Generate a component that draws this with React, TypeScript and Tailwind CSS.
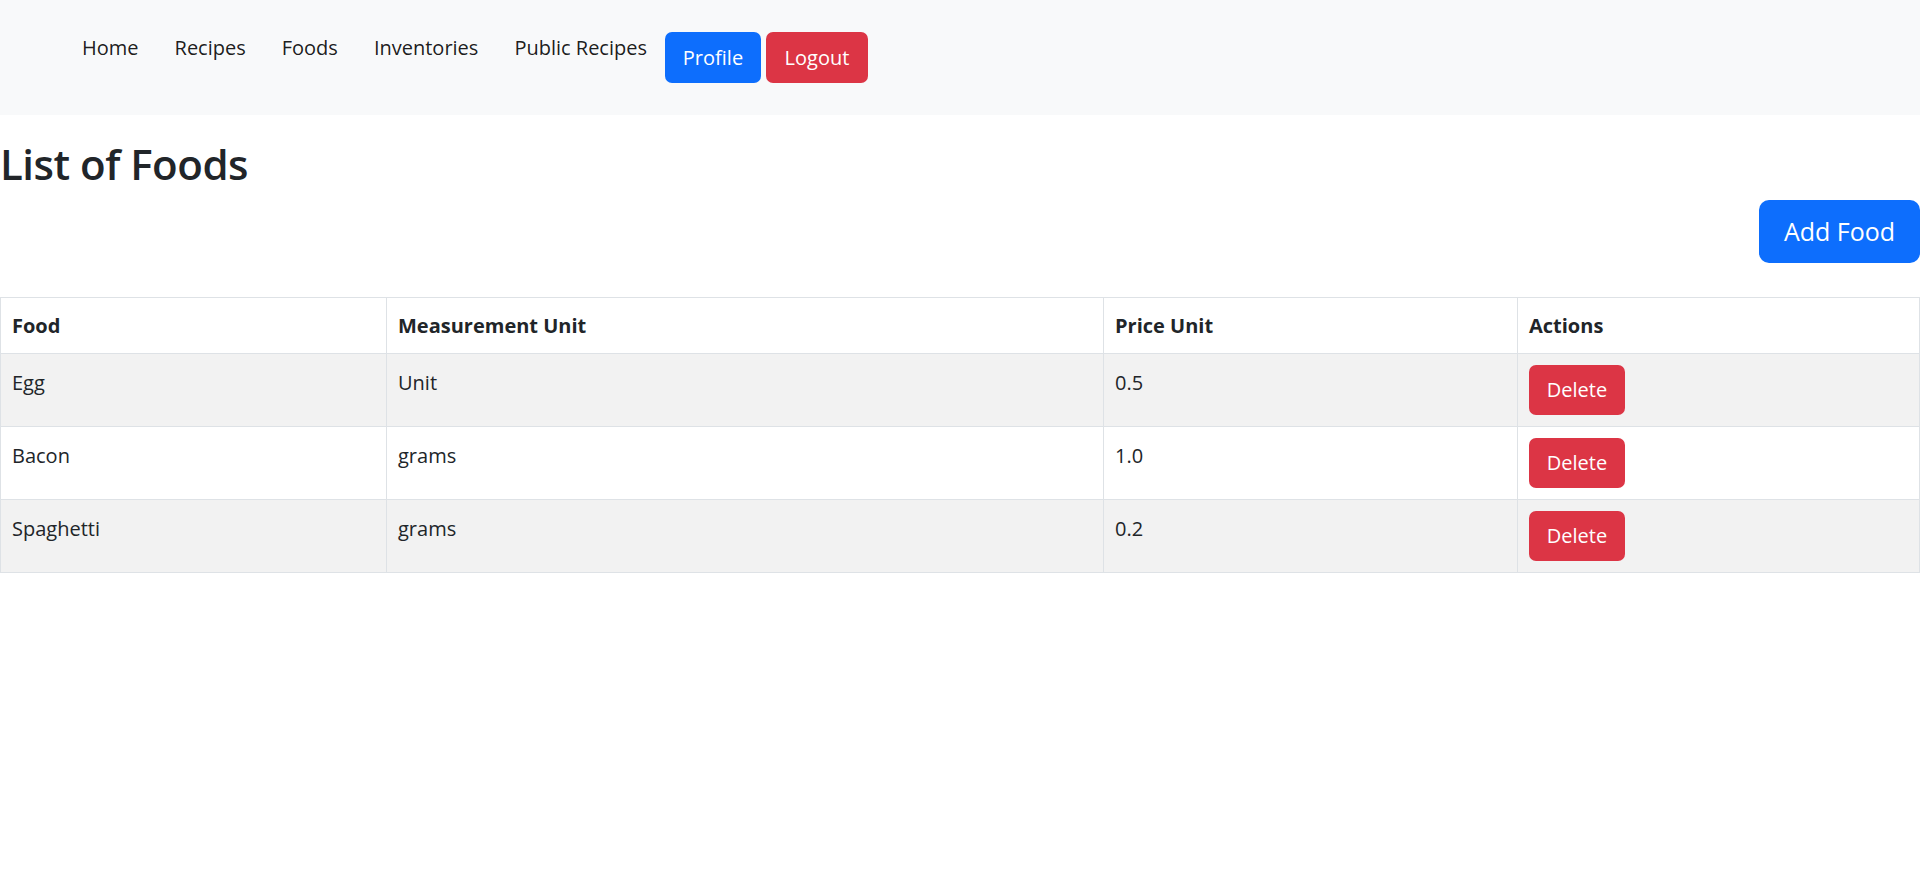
const foods = [
  { name: "Egg", unit: "Unit", price: "0.5" },
  { name: "Bacon", unit: "grams", price: "1.0" },
  { name: "Spaghetti", unit: "grams", price: "0.2" },
];

const links = ["Home", "Recipes", "Foods", "Inventories", "Public Recipes"];

export default function App() {
  return (
    <div className="min-h-[893px] bg-white text-[#212529] font-['Open_Sans',sans-serif]">
      <nav className="h-[115px] bg-[#f8f9fa] flex items-start pl-[64px]">
        <ul className="flex items-start">
          {links.map((l) => (
            <li key={l}>
              <a href="#" className="block px-[18px] pt-[33px] text-[20px] leading-[30px] text-black/90">
                {l}
              </a>
            </li>
          ))}
          <li className="pt-[32px] flex gap-[5px]">
            <button className="h-[51px] w-[96px] rounded-[7px] bg-[#0d6efd] text-white text-[20px]">Profile</button>
            <button className="h-[51px] w-[102px] rounded-[7px] bg-[#dc3545] text-white text-[20px]">Logout</button>
          </li>
        </ul>
      </nav>

      <h1 className="mt-[20px] text-[42px] leading-[58px] font-semibold tracking-[-0.5px]">List of Foods</h1>

      <div className="flex justify-end mt-[7px]">
        <button className="h-[63px] w-[161px] rounded-[10px] bg-[#0d6efd] text-white text-[25px]">Add Food</button>
      </div>

      <table className="mt-[34px] w-full border-collapse text-[20px] leading-[30px]">
        <colgroup>
          <col className="w-[386px]" />
          <col className="w-[717px]" />
          <col className="w-[414px]" />
          <col />
        </colgroup>
        <thead>
          <tr className="h-[56px]">
            <th className="border border-[#dee2e6] px-[11px] text-left font-bold">Food</th>
            <th className="border border-[#dee2e6] px-[11px] text-left font-bold">Measurement Unit</th>
            <th className="border border-[#dee2e6] px-[11px] text-left font-bold">Price Unit</th>
            <th className="border border-[#dee2e6] px-[11px] text-left font-bold">Actions</th>
          </tr>
        </thead>
        <tbody>
          {foods.map((f, i) => (
            <tr key={f.name} className={i % 2 === 0 ? "bg-[#f2f2f2]" : "bg-white"}>
              <td className="border border-[#dee2e6] px-[11px] pt-[14px] align-top">{f.name}</td>
              <td className="border border-[#dee2e6] px-[11px] pt-[14px] align-top">{f.unit}</td>
              <td className="border border-[#dee2e6] px-[11px] pt-[14px] align-top">{f.price}</td>
              <td className="border border-[#dee2e6] px-[11px] py-[11px] align-top">
                <button className="h-[50px] w-[96px] rounded-[7px] bg-[#dc3545] text-white text-[20px]">Delete</button>
              </td>
            </tr>
          ))}
        </tbody>
      </table>
    </div>
  );
}
